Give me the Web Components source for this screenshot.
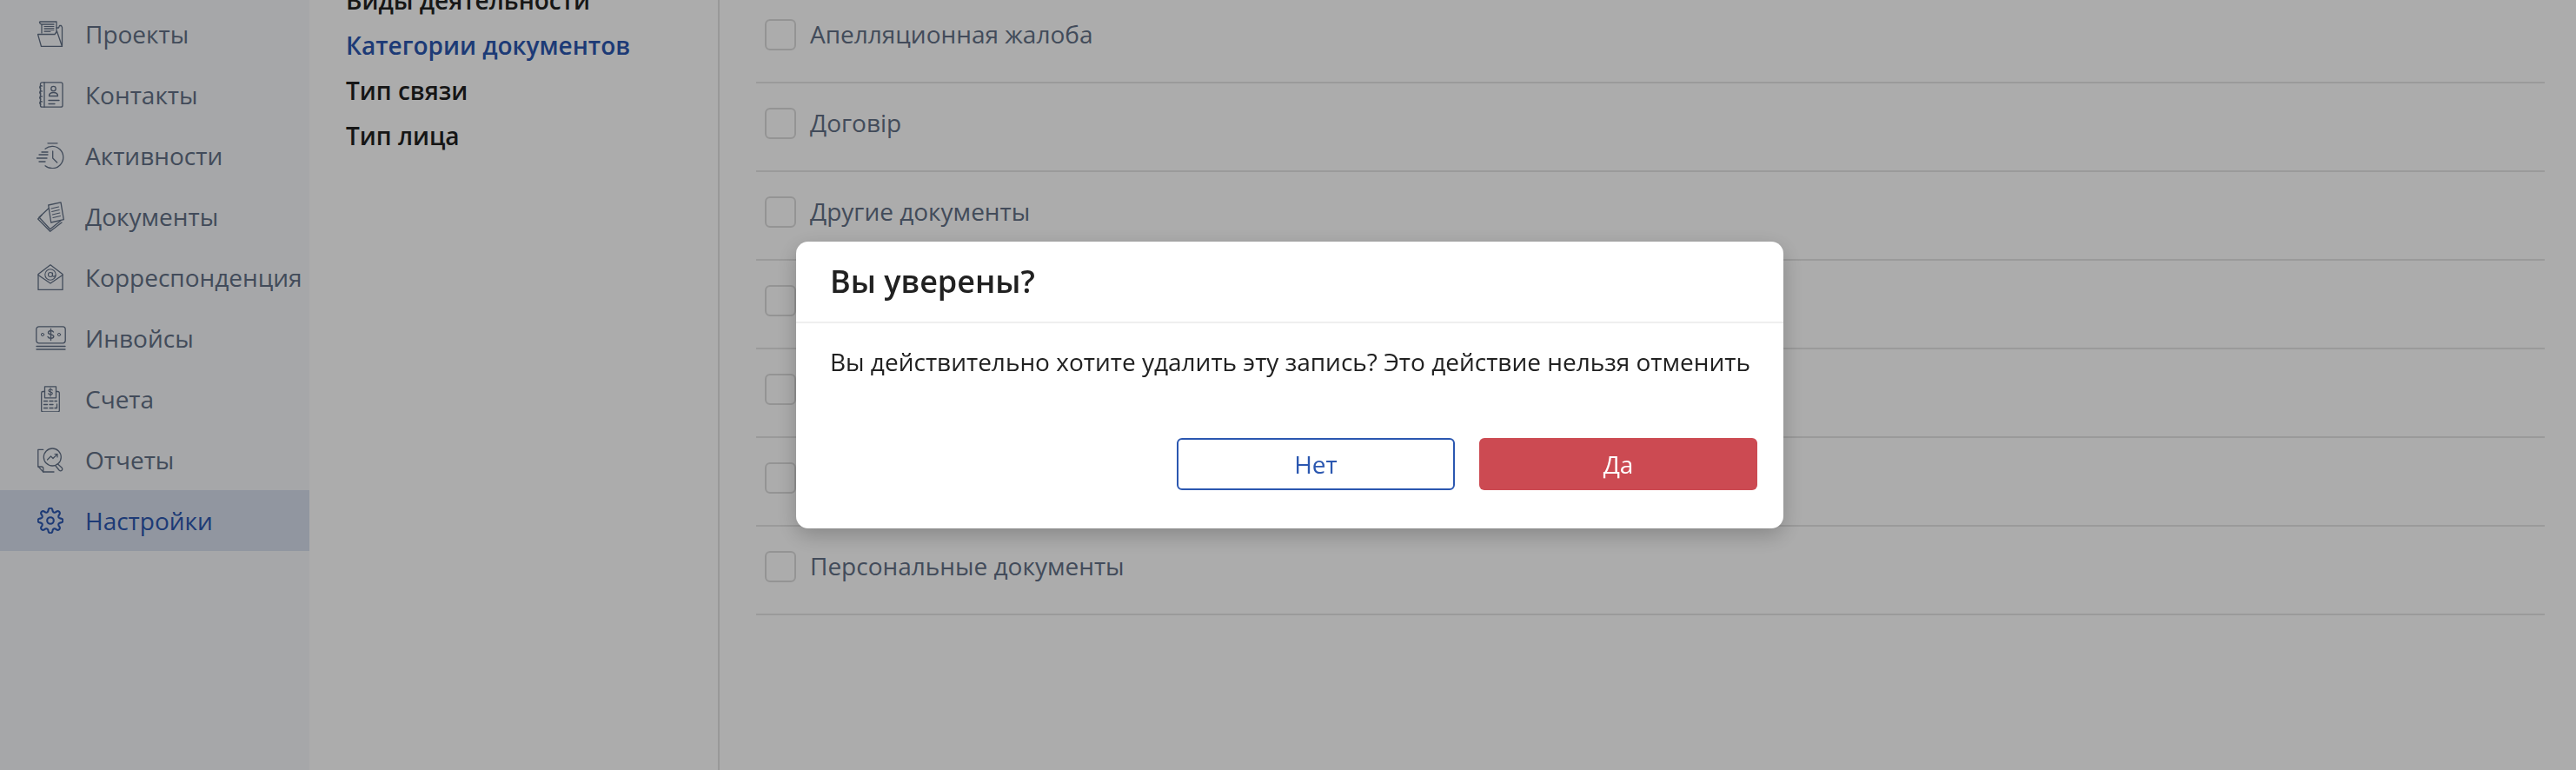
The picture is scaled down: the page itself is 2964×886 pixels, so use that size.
<!DOCTYPE html>
<html lang="ru"><head><meta charset="utf-8"><title>Настройки</title>
<style>
html,body{margin:0;padding:0;height:100%;overflow:hidden;background:#fff;font-family:"Open Sans","Noto Sans",sans-serif;}
</style></head><body>
<app-shell>
  <side-bar slot="side">
    <nav-item icon="projects">Проекты</nav-item>
    <nav-item icon="contacts">Контакты</nav-item>
    <nav-item icon="activity">Активности</nav-item>
    <nav-item icon="docs">Документы</nav-item>
    <nav-item icon="mail">Корреспонденция</nav-item>
    <nav-item icon="invoice">Инвойсы</nav-item>
    <nav-item icon="bills">Счета</nav-item>
    <nav-item icon="reports">Отчеты</nav-item>
    <nav-item icon="gear" active>Настройки</nav-item>
  </side-bar>
  <sub-menu slot="menu">
    <menu-link>Виды деятельности</menu-link>
    <menu-link active>Категории документов</menu-link>
    <menu-link>Тип связи</menu-link>
    <menu-link>Тип лица</menu-link>
  </sub-menu>
  <check-list slot="main">
    <check-row>Апелляционная жалоба</check-row>
    <check-row>Договір</check-row>
    <check-row>Другие документы</check-row>
    <check-row></check-row>
    <check-row></check-row>
    <check-row></check-row>
    <check-row>Персональные документы</check-row>
  </check-list>
</app-shell>
<confirm-dialog heading="Вы уверены?">
  Вы действительно хотите удалить эту запись? Это действие нельзя отменить
  <ui-button slot="actions" variant="outline">Нет</ui-button>
  <ui-button slot="actions" variant="danger">Да</ui-button>
</confirm-dialog>
<script>
function gearPath(){
  let d='';
  for(let i=0;i<=160;i++){
    const t=i/160*Math.PI*2+Math.PI/8;
    const c=Math.cos(8*t);
    const r=12.3+2.1*Math.sign(c)*Math.pow(Math.abs(c),.6);
    d+=(i?'L':'M')+(15+r*Math.sin(t)).toFixed(2)+' '+(15-r*Math.cos(t)).toFixed(2);
  }
  return d+'Z';
}
const ICONS={
projects:{w:30,h:30,s:`<path d="M3 1h19M22 1v11M5 4v10M2.500 1.200c0 1.500 1 2.800 2.500 2.800h14"/><path d="M8 6.500h11M8 8.500h11M8 10.500h11M8 12.500h7" stroke-width="1"/><path d="M22 8h2.500l1-2.500h2l1 2v21"/><path d="M.5 15.500h19.500l2.500-3.500 6 17.500H4.500z"/>`},
contacts:{w:30,h:30,s:`<rect x="3.500" y=".8" width="25.500" height="28.400" rx="2"/><path d="M8 .8v28.400"/><path d="M5.500 5c-2.500-1-4 2-1.500 3M5.500 11c-2.500-1-4 2-1.500 3M5.500 17c-2.500-1-4 2-1.500 3M5.500 23c-2.500-1-4 2-1.500 3"/><circle cx="18.500" cy="8" r="2.700"/><path d="M13.500 16.500c0-2.800 2-4 5-4s5 1.200 5 4z"/><path d="M13 21.500h12M13 25.500h7"/>`},
activity:{w:32,h:30,s:`<path d="M13 .8h11"/><path d="M10 7.200A12.700 12.700 0 1 1 10 26.800"/><path d="M18.700 10v8l5 5"/><path d="M6 11h7M3 14h10M0 18h12M3 22h7"/>`},
docs:{w:31,h:35,s:`<path d="M12.700 4 27 .8 30.300 20.700 15.700 24z"/><path d="M16 8l8.500-2M16.700 11.500l8.500-2M17.300 15l8.500-2M18 18.500l8.500-2" stroke-width="1.100"/><path d="M12.700 8 2 18l12.700 13.700 12-9.700"/><path d="M5 15.500 .7 20l14 14.300 13.300-10.300"/>`},
mail:{w:30,h:30,s:`<path d="M1 11.500 15 .8l14 10.700v18H1z"/><path d="M1 12.500 15 22l14-9.500"/><circle cx="15" cy="12" r="6.200" stroke-width="1.100"/><circle cx="15" cy="12" r="2.500" stroke-width="1.100"/><path d="M17.500 10v3c0 1.500 2 1.500 3.500 0" stroke-width="1.100"/>`},
invoice:{w:35,h:28,s:`<rect x=".8" y=".8" width="33.400" height="19" rx="3"/><circle cx="8" cy="10" r="1.600" stroke-width="1"/><circle cx="27" cy="10" r="1.600" stroke-width="1"/><path d="M20.500 7c-.5-.9-1.600-1.500-3-1.500-1.700 0-3 .9-3 2.200 0 3 6.300 1.300 6.300 4.400 0 1.300-1.400 2.200-3.300 2.200-1.700 0-3-.6-3.400-1.800M17.500 3.500v13" stroke-width="1.400"/><path d="M1 23.500h33M1 27h33"/>`},
bills:{w:22,h:30,s:`<path d="M4.500 6.500H2.500a1.800 1.800 0 0 0-1.800 1.800v19.900c0 1 .8 1.800 1.800 1.800h17c1 0 1.800-.8 1.800-1.800V8.300a1.800 1.800 0 0 0-1.800-1.800h-2"/><rect x="4.500" y=".8" width="13" height="13"/><path d="M13.300 5c-.5-.8-1.300-1-2.300-1-1.200 0-2.100.6-2.100 1.500 0 2 4.400.9 4.400 2.900 0 .9-.9 1.500-2.400 1.500-1.100 0-2-.4-2.400-1.200M11 2.500v9.500" stroke-width="1.100"/><path d="M3.500 17.500h4M10 17.500h4M16 17.500h2.500M3.500 21.500h4M10 21.500h4M3.500 25.500h4M10 25.500h4M18.500 21v4.500H16" stroke-width="1.300"/>`},
reports:{w:30,h:30,s:`<path d="M6.700 3.300H.8v19.300l6 6.400H19"/><path d="M.8 23h4c1.300 0 2 .8 2 2v4"/><circle cx="17.300" cy="12" r="10"/><path d="M11.500 15l4-4 2.500 2.500 5-5M20 8.500h3V12" stroke-width="1.200"/><path d="M23.500 20l4.500 4c2 2.500-.8 5-3 3l-4-5"/>`},
gear:{w:30,h:30,sw:2.100,s:`<path d="${gearPath()}"/><circle cx="15" cy="15" r="3.800"/>`}
};
function def(name,html,Cls){
  const t=document.createElement('template');t.innerHTML=html;
  customElements.define(name,class extends (Cls||HTMLElement){
    constructor(){super();this.attachShadow({mode:'open'}).appendChild(t.content.cloneNode(true));if(this.init)this.init();}
  });
}
def('app-shell',`<style>:host{display:flex;width:100%;height:100vh;overflow:hidden;align-items:stretch}
.a{flex:0 0 356px;display:flex}.b{flex:0 0 472px;display:flex}.c{flex:1;display:flex;min-width:0}
::slotted(*){flex:1}</style>
<div class="a"><slot name="side"></slot></div><div class="b"><slot name="menu"></slot></div><div class="c"><slot name="main"></slot></div>`);
def('side-bar',`<style>:host{display:block;background:#f6f8fb;padding-top:4px;box-sizing:border-box}</style><slot></slot>`);
class NavItem extends HTMLElement{
  init(){
    const i=ICONS[this.getAttribute('icon')];
    const box=this.shadowRoot.querySelector('.i');
    box.innerHTML=`<svg width="${i.w}" height="${i.h}" viewBox="0 0 ${i.w} ${i.h}" fill="none" stroke="currentColor" stroke-width="${i.sw||1.300}" stroke-linecap="round" stroke-linejoin="round">${i.s}</svg>`;
  }
}
def('nav-item',`<style>:host{display:flex;align-items:center;height:70px;color:#627086;font-size:28px;white-space:nowrap}
:host([active]){background:#d7deed;color:#2b57b0}
.i{flex:0 0 40px;margin:0 20px 0 38px;height:30px;display:flex;align-items:center;justify-content:center}
svg{display:block;flex:none}</style><div class="i"></div><span><slot></slot></span>`,NavItem);
def('sub-menu',`<style>:host{display:block;box-sizing:border-box;padding-left:42px;border-right:2px solid #e3e3e3}
.w{margin-top:-26px}</style><div class="w"><slot></slot></div>`);
def('menu-link',`<style>:host{display:block;height:52px;line-height:52px;font-size:28px;font-weight:600;color:#222;white-space:nowrap}
:host([active]){color:#2b57b0}</style><slot></slot>`);
def('check-list',`<style>:host{display:block;padding:0 36px 0 42px}.w{margin-top:-6px}</style><div class="w"><slot></slot></div>`);
def('check-row',`<style>:host{display:flex;align-items:center;box-sizing:border-box;height:102px;padding:28px 0 36px 10px;border-bottom:2px solid #e4e4e4;color:#627086;font-size:28px;white-space:nowrap}
.b{flex:0 0 36px;height:36px;box-sizing:border-box;border:2px solid #dcdcdc;border-radius:6px;background:#fff;margin-right:16px}
span{margin-top:-2px}</style><div class="b"></div><span><slot></slot></span>`);
class Dialog extends HTMLElement{init(){this.shadowRoot.querySelector('h2').textContent=this.getAttribute('heading');}}
def('confirm-dialog',`<style>:host{position:fixed;inset:0;display:flex;align-items:center;justify-content:center;padding-left:4px;background:rgba(0,0,0,.325);box-sizing:border-box}
.m{width:1136px;height:330px;background:#fff;border-radius:14px;box-shadow:0 8px 24px rgba(0,0,0,.22);display:flex;flex-direction:column;box-sizing:border-box}
h2{margin:0;height:94px;line-height:92px;box-sizing:border-box;padding-left:39px;font-size:36px;font-weight:600;color:#212121;border-bottom:2px solid #efefef}
.t{flex:1;padding:22px 39px 0;font-size:28px;line-height:44px;color:#212121;white-space:nowrap}
.f{display:flex;justify-content:flex-end;gap:28px;padding:0 30px 44px}</style>
<div class="m"><h2></h2><div class="t"><slot></slot></div><div class="f"><slot name="actions"></slot></div></div>`,Dialog);
def('ui-button',`<style>:host{display:flex;align-items:center;justify-content:center;width:320px;height:60px;box-sizing:border-box;border-radius:6px;font-size:28px;font-weight:500;line-height:1;white-space:nowrap}
:host([variant=outline]){border:2px solid #2b57b0;color:#2b57b0;background:#fff}
:host([variant=danger]){background:#cc4a52;color:#fff}</style><slot></slot>`);
</script>
</body></html>
